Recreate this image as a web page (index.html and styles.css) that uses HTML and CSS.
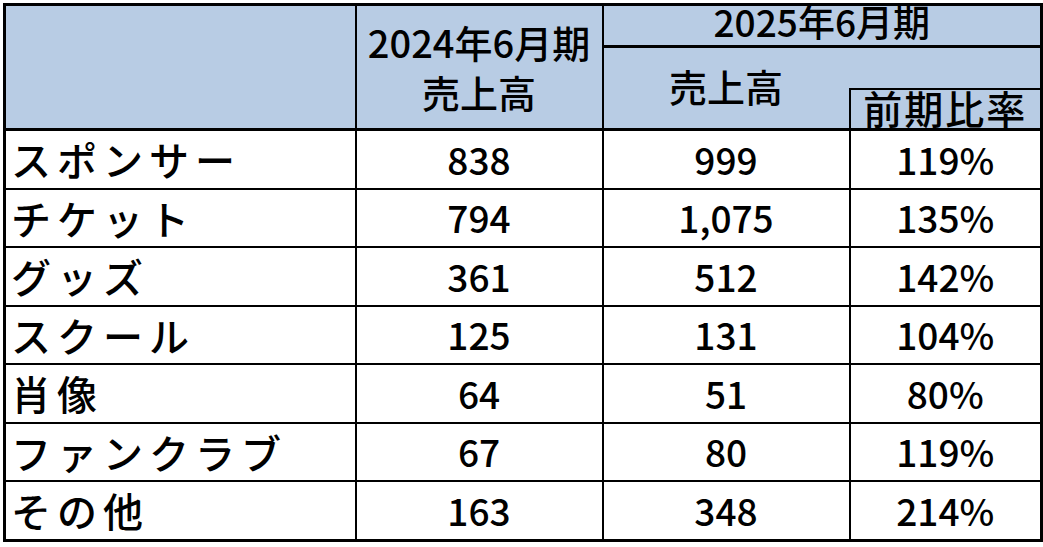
FILE: index.html
```html
<!DOCTYPE html>
<html lang="ja">
<head>
<meta charset="utf-8">
<link rel="stylesheet" href="styles.css">
</head>
<body>
<div class="wrap">
<table class="sales">
  <colgroup>
    <col class="c-label">
    <col class="c-num">
    <col class="c-num">
    <col class="c-ratio">
  </colgroup>
  <thead>
    <tr class="h1">
      <th rowspan="3" class="blank"></th>
      <th rowspan="3" class="prev"><div class="l1">2024年6月期</div><div class="l2">売上高</div></th>
      <th colspan="2" class="cur"><div class="t">2025年6月期</div></th>
    </tr>
    <tr class="h2">
      <th rowspan="2" class="sub"><div class="t">売上高</div></th>
      <th class="gap"></th>
    </tr>
    <tr class="h3">
      <th class="ratio-h"><div class="t">前期比率</div></th>
    </tr>
  </thead>
  <tbody>
    <tr><td class="lbl">スポンサー</td><td>838</td><td>999</td><td>119%</td></tr>
    <tr><td class="lbl">チケット</td><td>794</td><td>1,075</td><td>135%</td></tr>
    <tr><td class="lbl">グッズ</td><td>361</td><td>512</td><td>142%</td></tr>
    <tr><td class="lbl">スクール</td><td>125</td><td>131</td><td>104%</td></tr>
    <tr><td class="lbl">肖像</td><td>64</td><td>51</td><td>80%</td></tr>
    <tr><td class="lbl">ファンクラブ</td><td>67</td><td>80</td><td>119%</td></tr>
    <tr><td class="lbl">その他</td><td>163</td><td>348</td><td>214%</td></tr>
  </tbody>
</table>
</div>
</body>
</html>
```
FILE: styles.css
```css
html, body {
  margin: 0;
  padding: 0;
  background: #ffffff;
}
.wrap {
  padding: 3px 0 0 3px;
}
.sales {
  border-collapse: collapse;
  table-layout: fixed;
  width: 1037px;
  border: 3px solid #000;
  font-family: "Noto Sans CJK JP", "Noto Sans", sans-serif;
  color: #000;
}
.c-label { width: 351px; }
.c-num { width: 247px; }
.c-ratio { width: 192px; }

.sales th {
  background: #b8cce4;
  font-weight: 500;
  font-size: 38px;
  padding: 0;
  border-left: 2px solid #000;
  text-align: center;
  vertical-align: top;
  line-height: 38px;
}
.sales th.blank { border-left: none; border-bottom: 3px solid #000; }
.h1 { height: 42px; }
.h2 { height: 42px; }
.h3 { height: 41px; }
.sales th.prev { border-bottom: 3px solid #000; }
.prev .l1 { margin-top: 17px; }
.prev .l2 { margin-top: 12px; }
.sales th.cur { border-bottom: 3px solid #000; font-size: 37px; line-height: 37px; }
.cur .t { margin-top: -3px; }
.sales th.sub { border-bottom: 3px solid #000; }
.sub .t { margin-top: 19px; }
.sales th.gap { border-left: none; border-bottom: 2px solid #000; }
.sales th.ratio-h {
  border-bottom: 3px solid #000;
  border-left: 2px solid #000;
  font-size: 39px;
  letter-spacing: 2px;
}
.ratio-h .t { margin-top: -2px; }

.sales td {
  height: 56.5px;
  padding: 0;
  font-size: 37px;
  font-weight: 500;
  text-align: center;
  vertical-align: middle;
  border-left: 2px solid #000;
  border-top: 2px solid #000;
  line-height: 1;
}
.sales td.lbl {
  text-align: left;
  padding-left: 5px;
  font-size: 40px;
  letter-spacing: 6px;
  border-left: none;
}
.sales tbody tr:first-child td { border-top: 3px solid #000; }
```
